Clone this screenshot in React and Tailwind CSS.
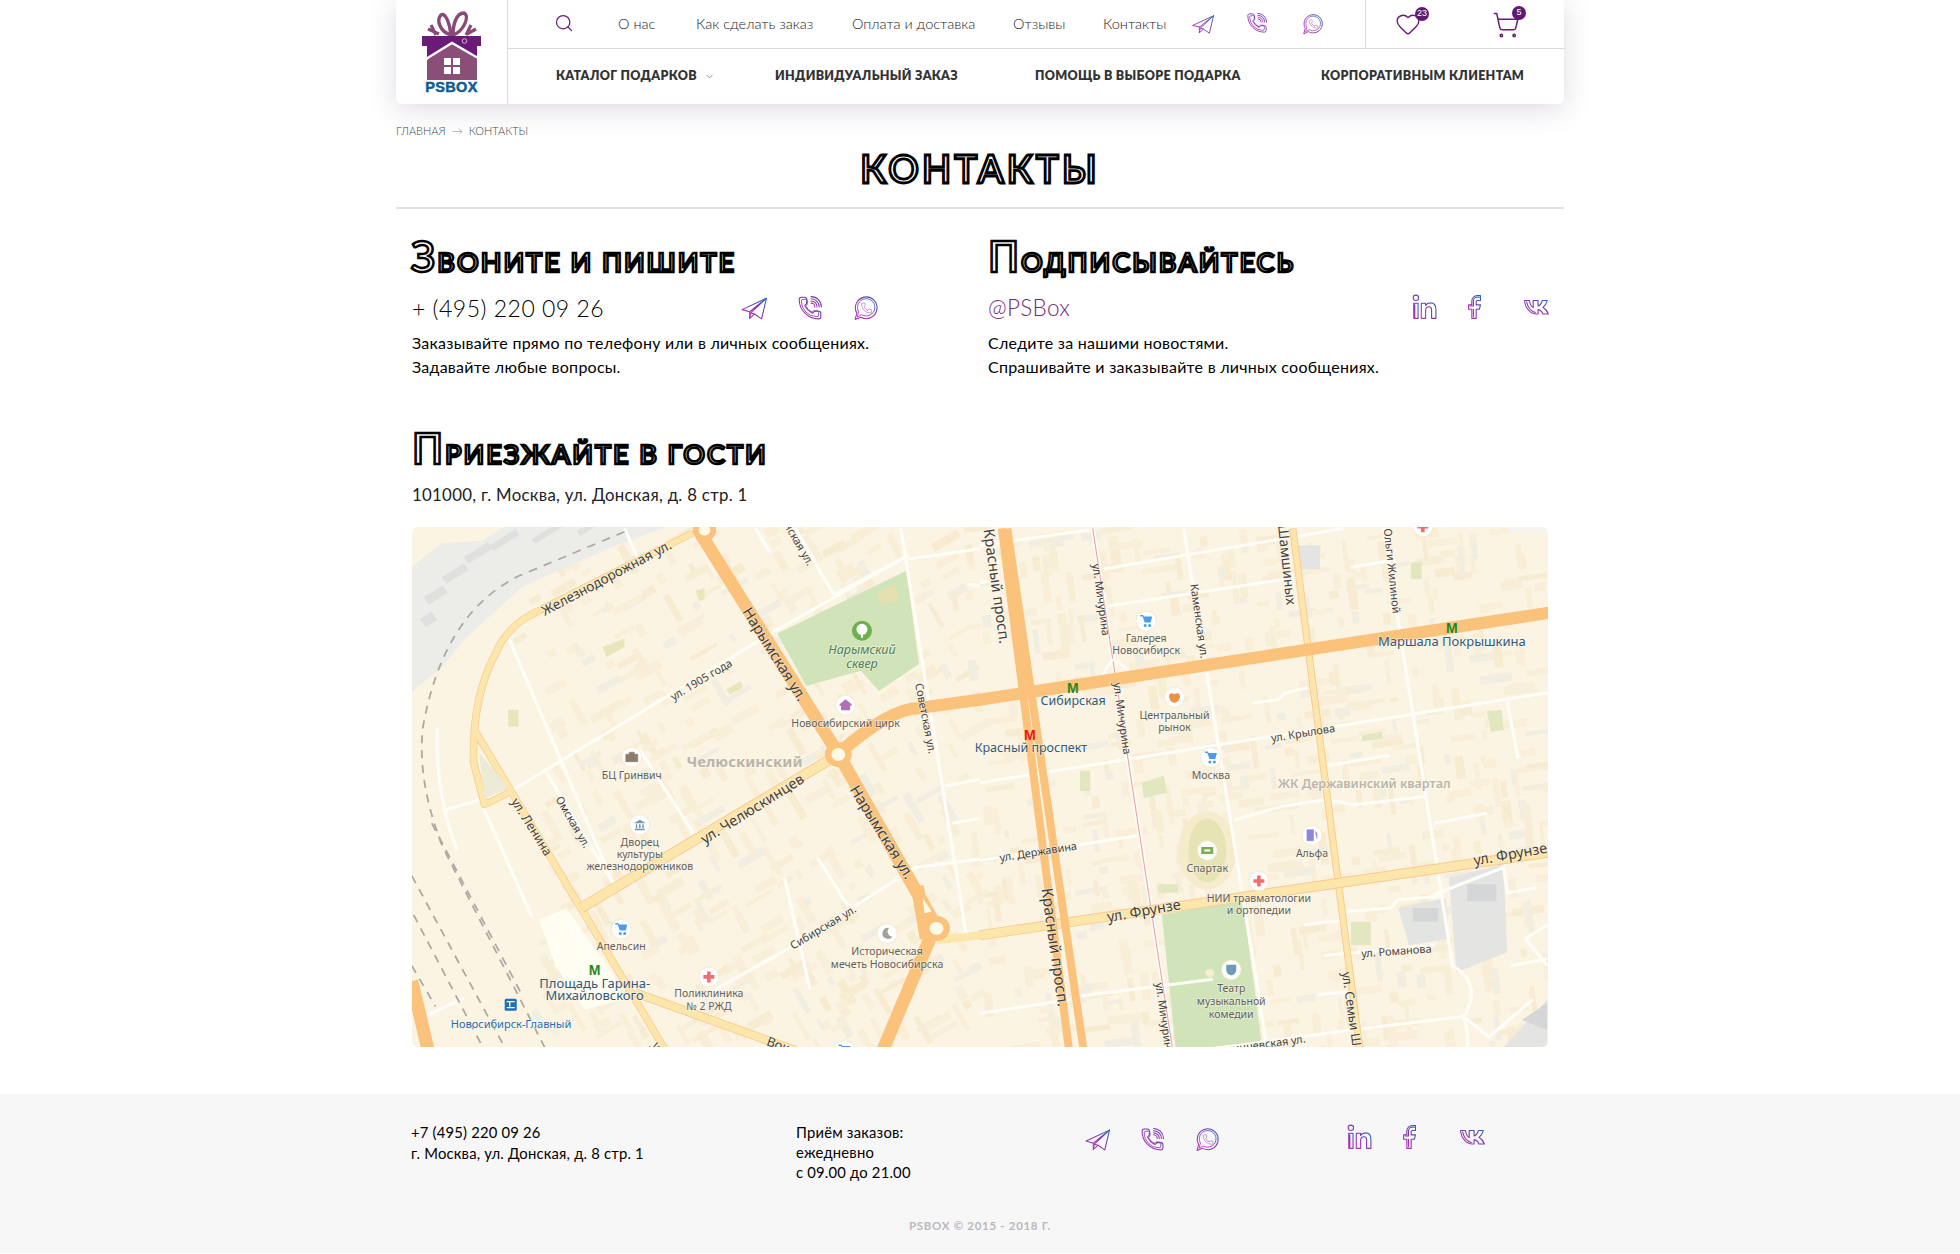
import React from 'react';
import { Search, Heart, ShoppingCart, ChevronDown } from 'lucide-react';

const PHONE = 'M13.832 16.568a1 1 0 0 0 1.213-.303l.355-.465A2 2 0 0 1 17 15h3a2 2 0 0 1 2 2v3a2 2 0 0 1-2 2A18 18 0 0 1 2 4a2 2 0 0 1 2-2h3a2 2 0 0 1 2 2v3a2 2 0 0 1-.8 1.6l-.468.351a1 1 0 0 0-.292 1.233 14 14 0 0 0 6.392 6.384';

// Outline icons with the purple -> blue gradient
function GradIcon({ size = 26, className = '', children }) {
  return (
    <svg viewBox="0 0 24 24" width={size} height={size} fill="none" stroke="url(#ig)" strokeWidth="1" strokeLinejoin="round" strokeLinecap="round" className={className}>
      {children}
    </svg>
  );
}

const inner = 'translate(2.4 2.4) scale(.8)';

function Telegram(props) {
  return (
    <GradIcon {...props}>
      <path d="M1 13.5 23.5 3 19 22l-6.5-4.5L8 21.5v-6z" />
      <path d="M8 15.5 23.5 3 M8 21.5l1-5 14.5-13.5 M12.500 17.500 9 16.500" />
    </GradIcon>
  );
}

function Viber(props) {
  return (
    <GradIcon {...props}>
      <path d={PHONE} />
      <path d={PHONE} transform={inner} />
      <path d="M13 1.500a9.500 9.500 0 0 1 9.500 9.500M13 3.500a7.500 7.500 0 0 1 7.500 7.500M13 5.500a5.500 5.500 0 0 1 5.500 5.500M13 7.500a3.500 3.500 0 0 1 3.500 3.500" />
    </GradIcon>
  );
}

function Whatsapp(props) {
  const bubble = 'M7.300 20.500A10 10 0 1 0 3.500 16.700L2 22.500Z';
  return (
    <GradIcon {...props}>
      <path d={bubble} />
      <path d={bubble} transform="translate(2.400 2) scale(.8)" />
      <path d={PHONE} transform="translate(7 6.500) scale(.46)" />
    </GradIcon>
  );
}

function Linkedin(props) {
  return (
    <GradIcon {...props}>
      <circle cx="4.500" cy="3.500" r="2.500" />
      <path d="M2.500 8.500h4v14h-4z M3.500 10v11.500" />
      <path d="M9.500 8.500h4v2c1-1.500 2.500-2.300 4.500-2.300 3.500 0 5 2.300 5 6v8.300h-4v-8c0-1.800-.8-2.800-2.400-2.800s-3.100 1-3.100 3v7.800h-4z" />
    </GradIcon>
  );
}

function Facebook(props) {
  return (
    <GradIcon {...props}>
      <path d="M18 1.500h-3a5 5 0 0 0-5 5v3.500H7v4h3v8.500h4V14h3l1-4h-4V7a1 1 0 0 1 1-1h3z" />
      <path d="M17 3h-2a3.500 3.500 0 0 0-3.500 3.500V11h-3M11.500 14v7" />
    </GradIcon>
  );
}

function Vk(props) {
  return (
    <GradIcon {...props}>
      <path d="M.500 6h4.500c.5 3 1.800 5.500 3.500 6.500V6h4.500v5c1.500-.3 3.200-2.500 4-5h4.500c-.7 3-2.500 5.200-4 6.300 1.700 1 3.800 3 5 6.200h-5c-.8-2.200-2.500-3.800-4.500-4.100v4.100h-1.500C6 18.500 1 13 .500 6z" />
      <path d="M2.500 7.500c1 4.500 4 8.500 8 9.500" />
    </GradIcon>
  );
}

function Logo() {
  return (
    <svg viewBox="0 0 60 82" width="60" height="82">
      <g fill="none" stroke="#8A4A78" strokeWidth="3.400">
        <path d="M29 24C18 21 14 9 19 4c5-3 9 10 10 20z" />
        <path d="M31 24c0-10 3-22 11-22 6 3 0 18-11 22z" />
        <path d="M14 24 9 14M17 23 6 18M45 23l9-5M44 24l5-10" strokeWidth="3.200" />
      </g>
      <path d="M0 25h59v10H0z M5 35h50v13H5z" fill="#6A1B78" />
      <path d="M5 49 30 33l25 15v21H5z" fill="#8A4F76" />
      <path d="M4 48 30 32l26 15" fill="none" stroke="#fff" strokeWidth="2.400" />
      <path d="M22 47h7v7h-7z M31 47h7v7h-7z M22 56h7v7h-7z M31 56h7v7h-7z" fill="#fff" />
      <circle cx="42.500" cy="30" r="2.300" fill="none" stroke="#C9B3CE" strokeWidth="1" />
      <text x="29.500" y="81" textAnchor="middle" fontFamily="Liberation Sans" fontWeight="700" fontSize="14.500" fill="#0F5C96" stroke="#0F5C96" strokeWidth=".5" letterSpacing=".3">PSBOX</text>
    </svg>
  );
}

// --- map drawing. coordinates come from crops of the map, so two groups, one per crop
const leftG = 'translate(-2 -2) scale(.3636 .339)';
const rightG = 'translate(568 -2) scale(.3636 .339)';
const pos = (g, x, y) => [(g === 'l' ? -2 : 568) + x * 0.3636, -2 + y * 0.339];

function buildBlocks() {
  let seed = 12345;
  const rnd = () => {
    seed = (seed * 1103515245 + 12345) & 0x7fffffff;
    return seed / 0x7fffffff;
  };
  const out = [];
  const colors = ['#F9EFD8', '#F8EDD5', '#F8EEDA', '#F9EFD8', '#F7ECD2', '#F1EDE0'];
  for (let i = 0; i < 1300; i++) {
    const x = rnd() * 1136;
    const y = rnd() * 520;
    const w = 7 + rnd() * 26;
    const h = 4 + rnd() * 5;
    const c = colors[Math.floor(rnd() * colors.length)];
    const swap = rnd() > 0.5;
    if (x < 130 - y * 0.02 && y > 120) continue;
    if (x < 100) continue;
    const ang = x < 530 + y * 0.1 ? (swap ? 60 : -30) : (swap ? 82 : -8);
    out.push({ x, y, w, h, c, ang, i });
  }
  return out;
}
const blocks = buildBlocks();

const white = '#FFFDF7';
const leftWhite = [
  'M1370 90 1000 315 285 780 100 840',
  'M1350 10 1530 1210',
  'M270 330 560 1060',
  'M630 660 780 910',
  'M375 730 560 1060',
  'M1120 980 1205 1125',
  'M1030 1040 1100 1370',
  'M1568 985 1390 1010 1040 1250 840 1370',
  'M1370 100 1568 70',
  'M950 10 990 80',
  'M1060 10 1165 205 M1165 205 1370 90',
  'M590 10 625 95',
  'M75 600Q70 800 130 960',
  'M200 830 335 1155',
  'M425 1150 530 1330 M40 1450 150 1395',
  'M1470 770 1568 750 M1490 880 1568 865 M1535 175 1568 180',
];
const rightWhite = [
  'M0 60 300 15',
  'M340 130 1000 10',
  'M350 240 840 160',
  'M0 760 1560 495',
  'M700 870 830 830 950 810 1030 825 1230 800',
  'M0 990 440 915',
  'M270 1390 640 1340',
  'M0 1440 250 1400',
  'M750 525 820 515 840 495 900 480',
  'M950 710 1125 680',
  'M945 1270 1250 1240',
  'M890 1180 1000 1165',
  'M1010 1140 1130 1130 1150 1105 1270 1095',
  'M1250 880 1395 850',
  'M1450 520 1480 690',
  'M560 10 790 1545',
  'M1110 10 1300 1300Q1360 1340 1350 1400 1340 1440 1330 1450 1345 1500 1340 1545',
  'M930 1385 1030 1375 M1330 1450 1020 1490 640 1545',
  'M1020 125 1130 105 M0 170 40 165',
  'M1560 1180 1500 1220 1560 1300 M1460 1300 1560 1280 M1330 1450 1400 1510 1520 1400',
  'M1250 1090 1440 1010 1450 1085 1530 1070',
];

function Lbl({ g, x, y, r = 0, s = 11, c = '#5F5F5F', t, w, i, a = 'middle' }) {
  const [px, py] = pos(g, x, y);
  return (
    <text
      x={px}
      y={py}
      textAnchor={a}
      dominantBaseline="central"
      transform={r ? `rotate(${r} ${px} ${py})` : undefined}
      fontFamily="Noto Sans, sans-serif"
      fontSize={s}
      fontWeight={w || 400}
      fontStyle={i ? 'italic' : 'normal'}
      fill={c}
      stroke="#FFF9EC"
      strokeOpacity=".55"
      strokeWidth="1.500"
      paintOrder="stroke"
    >
      {t}
    </text>
  );
}

function Poi({ g, x, y, kind }) {
  const [px, py] = pos(g, x, y);
  const glyphs = {
    cart: (
      <g fill="#4F9BE8">
        <path d="M-6-6h3l.7 1.500H6L4.500 1.500h-6L-3.500-4.500H-6z" />
        <circle cx="-1" cy="4.500" r="1.500" />
        <circle cx="3.500" cy="4.500" r="1.500" />
      </g>
    ),
    cross: <path d="M-1.800-5.500h3.600v3.700h3.700v3.600H1.800v3.700h-3.600V1.800h-3.700v-3.600h3.700z" fill="#F26E6E" />,
    apple: <path d="M0-3c3-2 5.500-.5 5.500 2S3 6 0 5.500C-3 6-5.500 1.500-5.500-1S-3-5 0-3z" fill="#EE9345" />,
    brief: <path d="M-6-3h12v7.500H-6z M-2.500-3v-2h5v2" fill="#8C7B6B" stroke="#8C7B6B" strokeWidth=".6" />,
    museum: <path d="M-6-1.500 0-5l6 3.500z M-5 4h10v1.500H-5z M-4-.5h1.500V3.500H-4z M-.8-.5H.8V3.500H-.8z M2.500-.5H4V3.500H2.500z" fill="#6E9BB5" />,
    circus: <path d="M0-6 6-1v1.500H4.500V5h-9V.5H-6V-1z" fill="#B16FB8" />,
    moon: <path d="M2-5.500a5.500 5.500 0 1 0 3.500 8.500A5 5 0 0 1 2-5.500z" fill="#A3A09A" />,
    fuel: <path d="M-5-5.500h6.500V5.500H-5z M3-4l2 2v5.500" fill="#8D86DA" stroke="#8D86DA" strokeWidth=".6" />,
    stadium: <path d="M-6-3.500h12v7H-6z M-3-1h6v2h-6z" fill="#7CAF4E" fillRule="evenodd" />,
    mask: <path d="M-5-5h10v5c0 3-2.500 5.500-5 5.500S-5 3-5 0z" fill="#6E9BB5" />,
  };
  return (
    <g transform={`translate(${px} ${py})`}>
      <circle r="10.500" fill="#F3E6CC" opacity=".6" />
      <circle r="9.500" fill="#fff" />
      {glyphs[kind]}
    </g>
  );
}

function Metro({ g, x, y, c = '#1E8A1E' }) {
  const [px, py] = pos(g, x, y);
  return (
    <text x={px} y={py} textAnchor="middle" dominantBaseline="central" fontFamily="Liberation Sans" fontWeight="700" fontSize="14" fill={c}>
      М
    </text>
  );
}

const grayBits = [[12, 70, 22, 9], [30, 50, 26, 8], [52, 30, 28, 8], [78, 18, 30, 7], [8, 92, 14, 10], [120, 12, 34, 6], [165, 4, 40, 6]];

function CityMap() {
  return (
    <svg viewBox="0 0 1136 520" width="1136" height="520" className="block">
      <rect width="1136" height="520" fill="#FBF4E3" />
      {blocks.map((b) => (
        <rect key={b.i} x={b.x} y={b.y} width={b.w} height={b.h} fill={b.c} transform={`rotate(${b.ang} ${b.x} ${b.y})`} />
      ))}
      <path d="M0 130V40L30 16 70 14 92 0H255L200 20 110 60 55 110 30 140 0 165z" fill="#ECECE9" />
      {grayBits.map(([x, y, w, h]) => (
        <rect key={x} x={x} y={y} width={w} height={h} fill="#E0E0E0" transform={`rotate(-32 ${x} ${y})`} />
      ))}

      <g transform={leftG} fill="none" strokeLinecap="butt">
        <path d="M1010 320 1365 135 1400 410 1290 490 1240 430 1090 475z" fill="#D1E3B9" stroke="none" />
        <path d="M1285 200 1335 175 1345 225 1295 235z" fill="#E5E0B0" stroke="none" />
        <path d="M355 1165 430 1130 560 1330 590 1400 480 1430 400 1300z" fill="#FFFEF0" stroke="none" />
        <path d="M530 360 590 335 590 360 540 390z M270 545h28v50h-28z M870 485 910 460 915 480 880 500z M785 195 810 185 810 220 795 225z" fill="#E9E6BC" stroke="none" />
        {leftWhite.map((d) => (
          <path key={d} d={d} stroke={white} strokeWidth="9" />
        ))}
        <g stroke="#ADA9A0" strokeWidth="5" strokeDasharray="24 20">
          <path d="M590 20 300 150Q90 260 35 600 20 760 90 950L370 1540" />
          <path d="M5 1035 260 1540 M10 1150 200 1540 M60 880 310 1390 M5 1300 70 1420" />
        </g>
        <g strokeLinejoin="round">
          {/* yellow ring road and lenina */}
          <path d="M775 25 360 250Q270 290 235 380 170 510 175 700L205 825 280 785M175 600 470 1130 700 1545" stroke="#F8C98E" strokeWidth="21" />
          <path d="M775 25 360 250Q270 290 235 380 170 510 175 700L205 825 280 785M175 600 470 1130 700 1545" stroke="#FDE6AC" strokeWidth="17" />
          <path d="M1150 695 470 1130" stroke="#F8C98E" strokeWidth="31" />
          <path d="M1150 695 470 1130" stroke="#FDE6AC" strokeWidth="26" />
          <path d="M620 1380 1060 1550" stroke="#F8C98E" strokeWidth="26" />
          <path d="M620 1380 1060 1550" stroke="#FDE6AC" strokeWidth="21" />
          <path d="M1450 1225 1570 1210" stroke="#FDE6AC" strokeWidth="24" />
          {/* orange */}
          <path d="M790 10 1178 675 1450 1190 M1178 675Q1320 540 1400 540L1570 515 M1430 1220 1300 1550 M5 1345 50 1550 M1395 1065 1420 1220" stroke="#FBC27C" strokeWidth="36" />
        </g>
        <circle cx="1178" cy="677" r="28" fill="#FFF9E6" stroke="#FBC27C" strokeWidth="18" />
        <circle cx="1448" cy="1190" r="28" fill="#FFF9E6" stroke="#FBC27C" strokeWidth="18" />
        <circle cx="810" cy="15" r="24" fill="#FFF9E6" stroke="#FBC27C" strokeWidth="16" />
        <path d="M1410 1100 1435 1140 1415 1145z" fill="#FFF9E6" />
        <path d="M190 670 270 775 205 810z" fill="#EDEAD8" />
      </g>

      <g transform={rightG} fill="none">
        <path d="M500 1150 722 1105 775 1530 540 1560z" fill="#D1E3B9" />
        <circle cx="632" cy="1322" r="12" fill="#F3EFD0" />
        <ellipse cx="625" cy="960" rx="80" ry="115" fill="#F6EBCB" />
        <ellipse cx="625" cy="960" rx="52" ry="94" fill="#E6E4B5" />
        <path d="M445 760 505 740 515 790 450 805z M1395 550 1435 545 1440 605 1405 610z M1050 620 1105 610 1108 630 1050 638z M275 725h28v60h-28z M1020 1170h55v70h-55z M490 1060h55v25h-55z M1185 110h30v50h-30z" fill="#E3E7C0" />
        <path d="M1290 1040 1440 1000 1450 1260 1310 1320z M1150 1130 1280 1100 1290 1220 1180 1240z M1440 1540 1560 1400V1550z M865 60h70v70h-60z" fill="#E4E4E2" />
        <path d="M1340 1060h80v50h-80z M1190 1130h70v40h-70z M1490 1460 1560 1410v80z" fill="#D5D6D8" />
        {rightWhite.map((d) => (
          <path key={d} d={d} stroke={white} strokeWidth="9" />
        ))}
        <path d="M310 10 530 1550" stroke={white} strokeWidth="12" />
        <path d="M310 10 530 1550" stroke="#E8A3A3" strokeWidth="3" />
        <path d="M335 445 365 395 M420 440 375 400" stroke={white} strokeWidth="8" />
        <path d="M860 10 1045 1550" stroke="#F8C98E" strokeWidth="20" />
        <path d="M860 10 1045 1550" stroke="#FDE6AC" strokeWidth="15" />
        <path d="M0 1210 1570 965" stroke="#F8C98E" strokeWidth="30" />
        <path d="M0 1210 1570 965" stroke="#FDE6AC" strokeWidth="25" />
        <path d="M60 10 245 1550 M75 10 285 1550" stroke="#FBC27C" strokeWidth="22" />
        <path d="M-10 517 1570 258" stroke="#FBC27C" strokeWidth="36" />
      </g>

      {/* left labels */}
      <Lbl g="l" x={540} y={155} r={-28} s={13.500} c="#3F3F3F" t="Железнодорожная ул." />
      <Lbl g="l" x={1005} y={380} r={58} s={15} c="#3F3F3F" t="Нарымская ул." />
      <Lbl g="l" x={1300} y={905} r={58} s={15} c="#3F3F3F" t="Нарымская ул." />
      <Lbl g="l" x={800} y={455} r={-31} s={11} c="#3F3F3F" t="ул. 1905 года" />
      <Lbl g="l" x={940} y={835} r={-32} s={14.500} c="#3F3F3F" t="ул. Челюскинцев" />
      <Lbl g="l" x={335} y={890} r={58} s={12.500} c="#3F3F3F" t="ул. Ленина" />
      <Lbl g="l" x={450} y={875} r={60} s={11} c="#3F3F3F" t="Омская ул." />
      <Lbl g="l" x={1420} y={570} r={79} s={11} c="#3F3F3F" t="Советская ул." />
      <Lbl g="l" x={1135} y={1185} r={-31} s={11} c="#3F3F3F" t="Сибирская ул." />
      <Lbl g="l" x={1058} y={30} r={60} s={11} c="#3F3F3F" t="Каинская ул." />
      <Lbl g="l" x={1105} y={1568} r={20} s={13} c="#3F3F3F" t="Вокзальная ул." />
      <Lbl g="l" x={675} y={1528} r={62} s={12} c="#3F3F3F" t="ул. Ленина" a="start" />
      <Lbl g="l" x={1243} y={367} s={12.500} c="#4E7F55" i t="Нарымский" />
      <Lbl g="l" x={1243} y={408} s={12.500} c="#4E7F55" i t="сквер" />
      <Lbl g="l" x={1198} y={585} s={10.500} t="Новосибирский цирк" />
      <Lbl g="l" x={920} y={697} s={15} w={700} c="#B9B5AB" t="Челюскинский" />
      <Lbl g="l" x={610} y={737} s={10.500} t="БЦ Гринвич" />
      <Lbl g="l" x={632} y={935} s={10.500} t="Дворец" />
      <Lbl g="l" x={632} y={971} s={10.500} t="культуры" />
      <Lbl g="l" x={632} y={1007} s={10.500} t="железнодорожников" />
      <Lbl g="l" x={581} y={1243} s={10.500} t="Апельсин" />
      <Lbl g="l" x={1312} y={1257} s={10.500} t="Историческая" />
      <Lbl g="l" x={1312} y={1294} s={10.500} t="мечеть Новосибирска" />
      <Lbl g="l" x={822} y={1382} s={10.500} t="Поликлиника" />
      <Lbl g="l" x={822} y={1418} s={10.500} t="№ 2 РЖД" />
      <Lbl g="l" x={508} y={1350} s={13} c="#2F5A80" t="Площадь Гарина-" />
      <Lbl g="l" x={508} y={1385} s={13} c="#2F5A80" t="Михайловского" />
      <Lbl g="l" x={278} y={1470} s={11} c="#1C6FB5" t="Новосибирск-Главный" />

      {/* right labels */}
      <Lbl g="r" x={48} y={180} r={82} s={15} c="#3F3F3F" t="Красный просп." />
      <Lbl g="r" x={208} y={1245} r={82} s={15.500} c="#3F3F3F" t="Красный просп." />
      <Lbl g="r" x={335} y={220} r={82} s={11} c="#3F3F3F" t="ул. Мичурина" />
      <Lbl g="r" x={393} y={570} r={82} s={11} c="#3F3F3F" t="ул. Мичурина" />
      <Lbl g="r" x={495} y={1350} r={82} s={11} c="#3F3F3F" t="ул. Мичурина" a="start" />
      <Lbl g="r" x={605} y={283} r={82} s={11} c="#3F3F3F" t="Каменская ул." />
      <Lbl g="r" x={843} y={85} r={84} s={14} c="#3F3F3F" t="ул. Шамшиных" />
      <Lbl g="r" x={1135} y={135} r={84} s={11} c="#3F3F3F" t="Ольги Жилиной" />
      <Lbl g="r" x={888} y={612} r={-9} s={11} c="#3F3F3F" t="ул. Крылова" />
      <Lbl g="r" x={160} y={962} r={-9} s={11} c="#3F3F3F" t="ул. Державина" />
      <Lbl g="r" x={450} y={1135} r={-10} s={14.500} c="#3F3F3F" t="ул. Фрунзе" />
      <Lbl g="r" x={1458} y={968} r={-10} s={14.500} c="#3F3F3F" t="ул. Фрунзе" />
      <Lbl g="r" x={1145} y={1255} r={-4} s={11} c="#3F3F3F" t="ул. Романова" />
      <Lbl g="r" x={1008} y={1318} r={82} s={12.500} c="#3F3F3F" t="ул. Семьи Шамшиных" a="start" />
      <Lbl g="r" x={770} y={1532} r={-8} s={11} c="#3F3F3F" t="Вагинцевская ул." />
      <Lbl g="r" x={457} y={333} s={10.500} t="Галерея" />
      <Lbl g="r" x={457} y={370} s={10.500} t="Новосибирск" />
      <Lbl g="r" x={535} y={560} s={10.500} t="Центральный" />
      <Lbl g="r" x={535} y={597} s={10.500} t="рынок" />
      <Lbl g="r" x={635} y={737} s={10.500} t="Москва" />
      <Lbl g="r" x={625} y={1012} s={10.500} t="Спартак" />
      <Lbl g="r" x={913} y={968} s={10.500} t="Альфа" />
      <Lbl g="r" x={767} y={1100} s={10.500} t="НИИ травматологии" />
      <Lbl g="r" x={767} y={1137} s={10.500} t="и ортопедии" />
      <Lbl g="r" x={691} y={1365} s={10.500} t="Театр" />
      <Lbl g="r" x={691} y={1403} s={10.500} t="музыкальной" />
      <Lbl g="r" x={691} y={1442} s={10.500} t="комедии" />
      <Lbl g="r" x={1057} y={763} s={12.500} w={600} c="#B8B6AE" t="ЖК Державинский квартал" />
      <Lbl g="r" x={256} y={518} s={12.500} c="#2F5A80" t="Сибирская" />
      <Lbl g="r" x={140} y={657} s={12.500} c="#2F5A80" t="Красный проспект" />
      <Lbl g="r" x={1298} y={342} s={13} c="#2F5A80" t="Маршала Покрышкина" />

      <Poi g="l" x={1198} y={532} kind="circus" />
      <Poi g="l" x={610} y={685} kind="brief" />
      <Poi g="l" x={632} y={884} kind="museum" />
      <Poi g="l" x={581} y={1192} kind="cart" />
      <Poi g="l" x={1312} y={1205} kind="moon" />
      <Poi g="l" x={822} y={1333} kind="cross" />
      <Poi g="l" x={1195} y={1550} kind="cart" />
      <Poi g="r" x={457} y={283} kind="cart" />
      <Poi g="r" x={535} y={508} kind="apple" />
      <Poi g="r" x={635} y={686} kind="cart" />
      <Poi g="r" x={625} y={960} kind="stadium" />
      <Poi g="r" x={913} y={915} kind="fuel" />
      <Poi g="r" x={767} y={1050} kind="cross" />
      <Poi g="r" x={691} y={1312} kind="mask" />
      <Poi g="r" x={1218} y={5} kind="cross" />

      {/* park tree */}
      <g transform={`translate(${pos('l', 1243, 312).join(' ')})`}>
        <circle r="10" fill="#6FB04E" />
        <circle cy="-1.500" r="5.500" fill="#fff" />
        <rect x="-1" y="2" width="2" height="5" fill="#fff" />
      </g>
      {/* station */}
      <g transform={`translate(${pos('l', 277, 1415).join(' ')})`}>
        <rect x="-6" y="-6" width="12" height="12" rx="1.500" fill="#1C6FB5" />
        <path d="M-4-3h8M-1-3v5M-4 3h8" stroke="#fff" strokeWidth="1.300" />
      </g>
      <Metro g="l" x={508} y={1312} />
      <Metro g="r" x={255} y={480} />
      <Metro g="r" x={137} y={620} c="#F01414" />
      <Metro g="r" x={1298} y={305} />
      <rect x="1095" y="-8" width="40" height="14" rx="6" fill="#F6F4EF" />
    </svg>
  );
}

const heading = "uppercase text-white font-semibold text-[27px] leading-none tracking-[2px] [-webkit-text-stroke:2.500px_#000]";

function Heading({ first, rest, className = '' }) {
  return (
    <h2 className={`${heading} ${className}`}>
      <span className="text-[42px]">{first}</span>
      {rest}
    </h2>
  );
}

export default function App() {
  return (
    <div className="min-h-screen bg-white font-['Lato',sans-serif] text-black font-light">
      <svg className="h-0 w-0">
        <defs>
          <linearGradient id="ig" x1="0" y1="1" x2="1" y2="0">
            <stop offset="0" stopColor="#C02FBA" />
            <stop offset=".55" stopColor="#7C36AE" />
            <stop offset="1" stopColor="#2468B8" />
          </linearGradient>
        </defs>
      </svg>

      <div className="mx-auto w-[1168px]">
        <header className="flex h-[104px] rounded-b-md bg-white shadow-[0_5px_28px_rgba(70,50,90,0.18)]">
          <div className="flex w-[112px] shrink-0 items-center justify-center border-r border-[#DDD8E2]">
            <Logo />
          </div>
          <div className="flex-1">
            <div className="flex h-[49px] items-center border-b border-[#DDD8E2] text-[14.500px] text-[#222]">
              <Search size={20} strokeWidth={1.500} className="ml-[46px] -mt-[2px] text-[#6A1B78]" />
              <span className="ml-[44px] w-[40px] whitespace-nowrap">О нас</span>
              <span className="ml-[38px] w-[117px] whitespace-nowrap">Как сделать заказ</span>
              <span className="ml-[39px] w-[123px] whitespace-nowrap">Оплата и доставка</span>
              <span className="ml-[38px] w-[49px] whitespace-nowrap">Отзывы</span>
              <span className="ml-[41px] w-[61px] whitespace-nowrap">Контакты</span>
              <Telegram size={22} className="ml-[28px] -mt-[1px]" />
              <Viber size={22} className="ml-[32px] -mt-[3px]" />
              <Whatsapp size={22} className="ml-[34px] -mt-[1px]" />
              <div className="ml-[41px] flex h-full w-[200px] items-center border-l border-[#DDD8E2]">
                <div className="relative ml-[29px]">
                  <Heart size={26} strokeWidth={1.300} className="text-[#6A1B78]" />
                  <span className="absolute -right-[8px] -top-[4px] flex h-[14px] w-[14px] items-center justify-center rounded-full bg-[#5E1A6E] font-['Liberation_Sans',sans-serif] text-[9px] font-normal text-white">23</span>
                </div>
                <div className="relative ml-[71px]">
                  <ShoppingCart size={28} strokeWidth={1.300} className="mt-[2px] text-[#6A1B78]" />
                  <span className="absolute -right-[6px] -top-[3px] flex h-[14px] w-[14px] items-center justify-center rounded-full bg-[#5E1A6E] font-['Liberation_Sans',sans-serif] text-[9px] font-normal text-white">5</span>
                </div>
              </div>
            </div>
            <nav className="flex h-[55px] items-center text-[12.500px] font-extrabold uppercase tracking-[0.3px] text-[#333]">
              <span className="ml-[48px] w-[147px] whitespace-nowrap">Каталог подарков</span>
              <ChevronDown size={11} className="ml-[1px] text-[#888]" />
              <span className="ml-[60px] w-[185px] whitespace-nowrap">Индивидуальный заказ</span>
              <span className="ml-[75px] w-[211px] whitespace-nowrap">Помощь в выборе подарка</span>
              <span className="ml-[75px] w-[205px] whitespace-nowrap">Корпоративным клиентам</span>
            </nav>
          </div>
        </header>

        <div className="mt-[19px] flex h-[16px] items-center text-[11px] uppercase text-[#444]">
          <span>Главная</span>
          <span className="mx-[6px] text-[#888]">→</span>
          <span>Контакты</span>
        </div>

        <h1 className="mt-[6px] h-[47px] text-center text-[38px] font-semibold uppercase leading-[47px] tracking-[3.200px] text-white [-webkit-text-stroke:2.800px_#000]">
          Контакты
        </h1>

        <div className="mt-[15px] border-t-2 border-[#E3E3E3]" />

        <section className="px-[16px]">
          <div className="mt-[26px] grid grid-cols-[576px_1fr]">
            <div>
              <Heading first="З" rest="воните и пишите" className="-ml-[1px] h-[42px]" />
              <div className="mt-[16px] flex h-[30px] items-center">
                <span className="w-[329px] text-[23px] tracking-[0.5px]">+ (495) 220 09 26</span>
                <Telegram size={26} />
                <Viber size={26} className="ml-[30px]" />
                <Whatsapp size={26} className="ml-[30px]" />
              </div>
              <p className="mt-[8px] text-[16px] font-normal leading-[24px] tracking-[0.25px]">
                Заказывайте прямо по телефону или в личных сообщениях.
                <br />
                Задавайте любые вопросы.
              </p>
            </div>
            <div>
              <Heading first="П" rest="одписывайтесь" className="h-[42px]" />
              <div className="mt-[16px] flex h-[30px] items-center">
                <span className="w-[423px] text-[22.500px] tracking-[0.3px] text-[#6F2A80]">@PSBox</span>
                <Linkedin size={26} className="-mt-[2px]" />
                <Facebook size={26} className="ml-[24px] -mt-[2px]" />
                <Vk size={26} className="ml-[37px] -mt-[2px]" />
              </div>
              <p className="mt-[8px] text-[16px] font-normal leading-[24px] tracking-[0.25px]">
                Следите за нашими новостями.
                <br />
                Спрашивайте и заказывайте в личных сообщениях.
              </p>
            </div>
          </div>

          <Heading first="П" rest="риезжайте в гости" className="mt-[48px] h-[42px]" />
          <p className="mt-[14px] h-[24px] text-[16.800px] font-normal leading-[24px] tracking-[0.3px] text-[#222]">101000, г. Москва, ул. Донская, д. 8 стр. 1</p>

          <div className="mt-[20px] h-[520px] w-[1136px] overflow-hidden rounded-md">
            <CityMap />
          </div>
        </section>
      </div>

      <footer className="mt-[47px] h-[159px] bg-[#F7F7F7]">
        <div className="mx-auto flex w-[1168px] px-[15px] pt-[28px]">
          <div className="w-[385px] text-[14.800px] font-normal leading-[21px] tracking-[0.2px]">
            +7 (495) 220 09 26
            <br />
            г. Москва, ул. Донская, д. 8 стр. 1
          </div>
          <div className="w-[289px] text-[14.800px] font-normal leading-[20px] tracking-[0.2px]">
            Приём заказов:
            <br />
            ежедневно
            <br />с 09.00 до 21.00
          </div>
          <div className="flex h-[34px] w-[261px] items-center">
            <Telegram size={25} />
            <Viber size={25} className="ml-[30px]" />
            <Whatsapp size={25} className="ml-[30px]" />
          </div>
          <div className="flex h-[30px] items-center">
            <Linkedin size={26} />
            <Facebook size={26} className="ml-[24px]" />
            <Vk size={26} className="ml-[38px]" />
          </div>
        </div>
        <p className="mt-[35px] text-center text-[11.500px] font-bold tracking-[0.7px] text-[#BBB6C0]">PSBOX © 2015 - 2018 Г.</p>
      </footer>
    </div>
  );
}
